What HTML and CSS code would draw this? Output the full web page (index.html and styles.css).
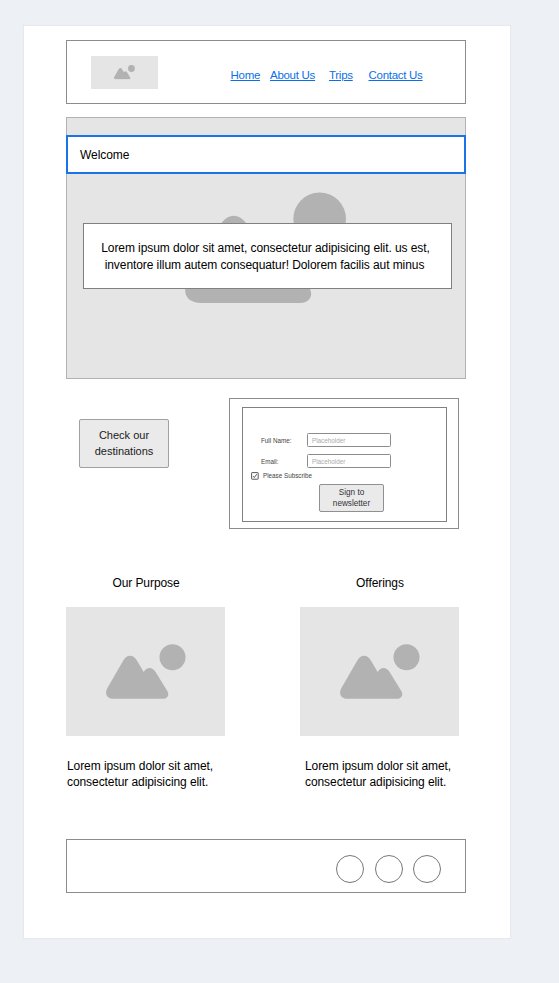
FILE: index.html
```html
<!DOCTYPE html>
<html lang="en">
<head>
<meta charset="utf-8">
<title>Travel wireframe</title>
<link rel="stylesheet" href="styles.css">
</head>
<body>
<svg class="defs" width="0" height="0" aria-hidden="true">
  <symbol id="picture" viewBox="0 0 80 55">
    <path d="M1.7 43.5 17 17C20.7 10 27.4 10 31.2 17L37.7 28C40.5 22.8 46.3 22.8 49.6 28L61 46.5C64 51 61.5 54.8 57 54.8H8C.5 54.8-1.8 49.5 1.7 43.5Z"/>
    <circle cx="66.5" cy="13.3" r="13"/>
  </symbol>
</svg>
<main class="page">
  <header class="header">
    <div class="logo"><svg class="picture"><use href="#picture"/></svg></div>
    <nav class="nav">
      <a href="#">Home</a>
      <a href="#">About Us</a>
      <a href="#">Trips</a>
      <a href="#">Contact Us</a>
    </nav>
  </header>
  <section class="hero">
    <svg class="picture hero-picture"><use href="#picture"/></svg>
    <h1 class="welcome">Welcome</h1>
    <p class="intro"><span>Lorem ipsum dolor sit amet, consectetur adipisicing elit. us est,</span><span>inventore illum autem consequatur! Dolorem facilis aut minus</span></p>
  </section>
  <section class="actions">
    <button class="button destinations">Check our<br>destinations</button>
    <div class="newsletter">
      <form class="form">
        <label class="field"><span>Full Name:</span><input placeholder="Placeholder"></label>
        <label class="field"><span>Email:</span><input placeholder="Placeholder"></label>
        <label class="subscribe">
          <svg class="check" viewBox="0 0 8 8"><rect x=".6" y=".6" width="6.6" height="6.6" rx=".5"/><path d="M2 4.1 3.3 5.5 5.8 2.2"/></svg>
          <span>Please Subscribe</span>
        </label>
        <button class="button sign" type="button">Sign to<br>newsletter</button>
      </form>
    </div>
  </section>
  <section class="cards">
    <article class="card">
      <h2>Our Purpose</h2>
      <div class="card-image"><svg class="picture"><use href="#picture"/></svg></div>
      <p>Lorem ipsum dolor sit amet,<br>consectetur adipisicing elit.</p>
    </article>
    <article class="card card-offerings">
      <h2>Offerings</h2>
      <div class="card-image"><svg class="picture"><use href="#picture"/></svg></div>
      <p>Lorem ipsum dolor sit amet,<br>consectetur adipisicing elit.</p>
    </article>
  </section>
  <footer class="footer">
    <svg class="dot" viewBox="0 0 28 28"><circle cx="14" cy="14" r="13.5"/></svg>
    <svg class="dot" viewBox="0 0 28 28"><circle cx="14" cy="14" r="13.5"/></svg>
    <svg class="dot" viewBox="0 0 28 28"><circle cx="14" cy="14" r="13.5"/></svg>
  </footer>
</main>
</body>
</html>
```
FILE: styles.css
```css
* { box-sizing: border-box; }
body {
  margin: 0;
  height: 983px;
  padding: 26px 0 0 24px;
  overflow: hidden;
  background: #edf1f6;
  color: #000;
  font: 12px/16px "Liberation Sans", Arial, sans-serif;
}
h1, h2, p { margin: 0; font-size: inherit; font-weight: normal; letter-spacing: -.075px; }
.defs { position: absolute; }
.page {
  width: 486px;
  height: 912px;
  padding: 14px 44px 0 42px;
  background: #fff;
  box-shadow: 0 0 1px 1px #e5e9ed;
}
.picture { display: block; width: 80px; height: 55px; fill: #b2b2b2; }

.header {
  display: flex;
  width: 400px;
  height: 64px;
  border: 1px solid #8c8c8c;
}
.logo {
  display: grid;
  place-items: center;
  width: 67px;
  height: 33px;
  margin: 15px 0 0 24px;
  background: #e5e5e5;
}
.logo .picture { width: 21px; height: 14.4px; }
.nav { display: flex; margin: 26px 0 0 72.5px; font-size: 11.5px; letter-spacing: -.28px; white-space: nowrap; }
.nav a { color: #0b6fe8; }
.nav a:nth-child(1) { width: 39.5px; }
.nav a:nth-child(2) { width: 59px; }
.nav a:nth-child(3) { width: 39.5px; }

.hero {
  position: relative;
  width: 400px;
  height: 262px;
  margin-top: 13px;
  padding-top: 17px;
  border: 1px solid #b2b2b2;
  background: #e5e5e5;
}
.hero-picture { position: absolute; left: 118px; top: 74px; width: 162px; height: 111.4px; }
.welcome {
  height: 39px;
  margin: 0 -1px;
  padding: 10px 12px 0;
  border: 2px solid #1a73e8;
  background: #fff;
}
.intro {
  position: relative;
  width: 369px;
  height: 66px;
  margin: 49px 0 0 16px;
  padding-top: 16px;
  border: 1px solid #808080;
  background: #fff;
  line-height: 17px;
  text-align: center;
  white-space: nowrap;
}
.intro span { display: block; margin-right: 4px; }
.intro span + span { margin-right: 6px; }

.actions { display: flex; align-items: flex-start; margin-top: 19px; }
.button {
  display: block;
  padding: 0;
  border: 1px solid #a0a0a0;
  border-radius: 2px;
  background: #eaeaea;
  color: #1a1a1a;
  font: 11px/16px "Liberation Sans", Arial, sans-serif;
  text-align: center;
}
.destinations { width: 90px; height: 49px; margin: 21px 0 0 13px; padding-bottom: 1px; }
.newsletter {
  width: 230px;
  height: 131px;
  margin-left: 60px;
  padding: 8px 0 0 12px;
  border: 1px solid #8c8c8c;
}
.form {
  width: 205px;
  height: 115px;
  padding: 25px 0 0 8px;
  border: 1px solid #808080;
  color: #444;
  font-size: 6.3px;
  line-height: 8px;
}
.field { display: flex; align-items: center; height: 14px; margin: 0 0 7px 10px; }
.field span { width: 46px; padding-top: 2px; }
.field input {
  width: 84px;
  height: 14px;
  padding: 0 4px;
  border: 1px solid #8c8c8c;
  border-radius: 1.5px;
  font: 6.3px "Liberation Sans", Arial, sans-serif;
}
.field input::placeholder { color: #aaa; }
.subscribe { display: flex; gap: 4px; align-items: center; height: 8px; margin-top: -3px; }
.check { width: 8px; height: 8px; fill: none; stroke: #444; stroke-width: .9; }
.sign { width: 65px; height: 28px; margin: 4px 0 0 68px; border-color: #909090; color: #333; font-size: 8.2px; line-height: 11px; }

.cards { display: flex; gap: 75px; margin-top: 46px; }
.card { width: 159px; }
.card h2 { margin-left: 1px; text-align: center; }
.card-image {
  display: grid;
  place-items: center;
  height: 129px;
  margin-top: 16px;
  background: #e5e5e5;
}
.card p { margin: 22px 0 0 1px; white-space: nowrap; }
.card-offerings p { margin-left: 5px; }

.footer {
  display: flex;
  justify-content: flex-end;
  gap: 10.4px;
  width: 400px;
  height: 54px;
  margin-top: 49px;
  padding: 14.5px 24px 0 0;
  border: 1px solid #8c8c8c;
}
.dot { width: 28px; height: 28px; fill: none; stroke: #666; stroke-width: .9; }
```
